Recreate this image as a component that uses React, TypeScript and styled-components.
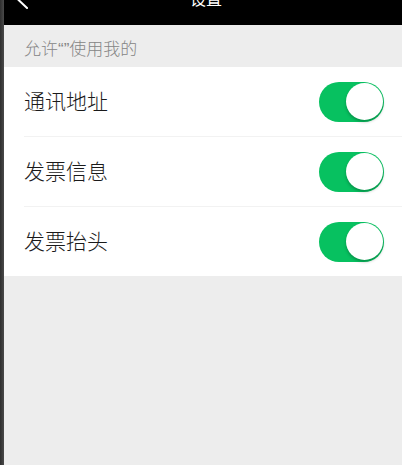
import styled, { createGlobalStyle } from "styled-components";

const GlobalStyle = createGlobalStyle`
  html, body {
    margin: 0;
    padding: 0;
    height: 100%;
    overflow: hidden;
    background: #ededed;
  }
  #root {
    height: 100%;
  }
  * {
    box-sizing: border-box;
  }
`;

const items = [
  { label: "通讯地址", on: true },
  { label: "发票信息", on: true },
  { label: "发票抬头", on: true },
];

export default function App() {
  return (
    <>
      <GlobalStyle />
      <SPage>
        <SEdge />
        <SMain>
          <SHeaderClip>
            <SHeader>
              <SBack aria-label="返回">
                <svg width="12" height="20" viewBox="0 0 12 20">
                  <path
                    d="M11 1 L1.5 10 L11 19"
                    fill="none"
                    stroke="#fff"
                    strokeWidth="2"
                    strokeLinecap="square"
                  />
                </svg>
              </SBack>
              <STitle>设置</STitle>
            </SHeader>
          </SHeaderClip>
          <SSectionTitle>允许“”使用我的</SSectionTitle>
          <SList>
            {items.map((item) => (
              <SRow key={item.label}>
                <SLabel>{item.label}</SLabel>
                <SSwitch $on={item.on}>
                  <SKnob $on={item.on} />
                </SSwitch>
              </SRow>
            ))}
          </SList>
        </SMain>
      </SPage>
    </>
  );
}

const SPage = styled.div`
  display: flex;
  height: 100%;
  font-family: "Liberation Sans", "Noto Sans CJK SC", sans-serif;
  font-weight: 300;
`;

const SEdge = styled.div`
  width: 4px;
  flex: 0 0 4px;
  background: linear-gradient(to right, #2e2e2e, #4a4a4a);
`;

const SMain = styled.div`
  flex: 1;
  display: flex;
  flex-direction: column;
  background: #ededed;
`;

const SHeaderClip = styled.div`
  height: 25px;
  background: #000;
  overflow: hidden;
  position: relative;
`;

const SHeader = styled.div`
  height: 44px;
  margin-top: -23px;
  display: flex;
  align-items: center;
  justify-content: center;
  position: relative;
`;

const SBack = styled.div`
  position: absolute;
  left: 12px;
  top: 0;
  height: 44px;
  display: flex;
  align-items: center;
`;

const STitle = styled.div`
  color: #fff;
  font-size: 16px;
  font-weight: 400;
  line-height: 20px;
  margin-left: 6px;
  margin-top: 1px;
`;

const SSectionTitle = styled.div`
  height: 42px;
  padding: 15px 20px 0;
  font-size: 17px;
  line-height: 20px;
  color: #858585;
`;

const SList = styled.div`
  background: #fff;
  padding-left: 20px;
`;

const SRow = styled.div`
  height: 70px;
  display: flex;
  align-items: center;
  justify-content: space-between;
  padding-right: 18px;
  border-bottom: 1px solid #f2f2f2;
  &:last-child {
    height: 69px;
    border-bottom: none;
  }
`;

const SLabel = styled.div`
  font-size: 21px;
  line-height: 24px;
  color: #1a1a1a;
  margin-top: 1px;
`;

const SSwitch = styled.div<{ $on: boolean }>`
  width: 65px;
  height: 40px;
  border-radius: 20px;
  background: ${(p) => (p.$on ? "#07c160" : "#e5e5e5")};
  display: flex;
  align-items: center;
  justify-content: ${(p) => (p.$on ? "flex-end" : "flex-start")};
  padding: 0 1px;
`;

const SKnob = styled.div<{ $on: boolean }>`
  width: 37px;
  height: 37px;
  border-radius: 50%;
  background: #fff;
  box-shadow: 0 2px 3px rgba(0, 0, 0, 0.25);
`;
